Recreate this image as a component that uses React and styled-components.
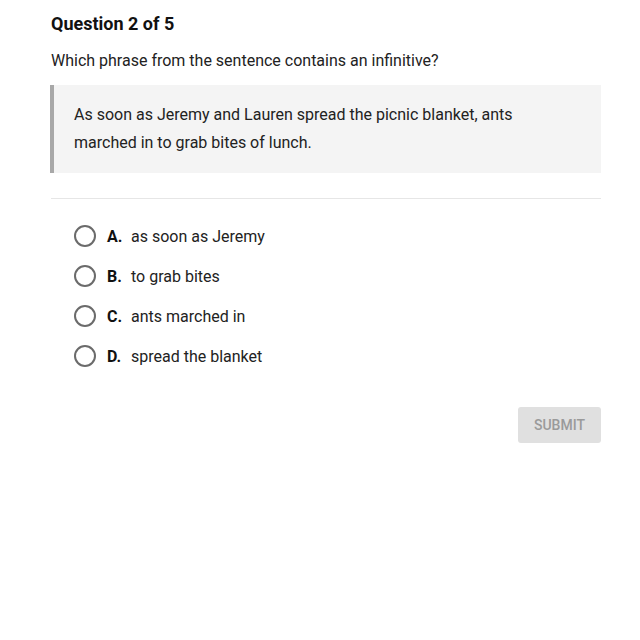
import React from "react";
import styled, { createGlobalStyle } from "styled-components";

const GlobalStyle = createGlobalStyle`
  body {
    margin: 0;
    background: #fff;
    font-family: Roboto, "Liberation Sans", sans-serif;
    color: #222;
  }
`;

const Page = styled.div`
  width: 550px;
  padding: 13px 39px 0 51px;
`;

const Title = styled.h2`
  margin: 0;
  font-size: 18px;
  font-weight: 700;
  line-height: 22px;
  color: #111;
`;

const Prompt = styled.p`
  margin: 16px 0 0;
  font-size: 16px;
  line-height: 20px;
  color: #222;
`;

const Passage = styled.blockquote`
  margin: 14px 0 0 -1px;
  padding: 16px 24px 16px 20px;
  background: #f4f4f4;
  border-left: 4px solid #a8a8a8;
  font-size: 16px;
  line-height: 28px;
  color: #222;
`;

const Divider = styled.hr`
  margin: 25px 0 0;
  border: none;
  border-top: 1px solid #e6e6e6;
`;

const Options = styled.div`
  display: flex;
  flex-direction: column;
  gap: 18px;
  padding: 26px 0 0 23px;
`;

const Option = styled.label`
  display: flex;
  align-items: center;
  height: 22px;
  font-size: 16px;
  color: #222;
  cursor: pointer;
`;

const Radio = styled.span`
  width: 18px;
  height: 18px;
  border: 2px solid #6b6b6b;
  border-radius: 50%;
  margin-right: 11px;
  flex-shrink: 0;
`;

const Letter = styled.b`
  width: 24px;
  font-weight: 700;
  color: #111;
`;

const Footer = styled.div`
  display: flex;
  justify-content: flex-end;
  margin-top: 40px;
`;

const SubmitButton = styled.button`
  width: 83px;
  height: 36px;
  border: none;
  border-radius: 3px;
  background: #e0e0e0;
  color: #9a9a9a;
  font-family: Roboto, "Liberation Sans", sans-serif;
  font-size: 14px;
  font-weight: 500;
`;

const choices = [
  ["A.", "as soon as Jeremy"],
  ["B.", "to grab bites"],
  ["C.", "ants marched in"],
  ["D.", "spread the blanket"],
];

export default function App() {
  return (
    <>
      <GlobalStyle />
      <Page>
        <Title>Question 2 of 5</Title>
        <Prompt>Which phrase from the sentence contains an infinitive?</Prompt>
        <Passage>
          As soon as Jeremy and Lauren spread the picnic blanket, ants
          marched in to grab bites of lunch.
        </Passage>
        <Divider />
        <Options>
          {choices.map(([letter, text]) => (
            <Option key={letter}>
              <Radio />
              <Letter>{letter}</Letter>
              {text}
            </Option>
          ))}
        </Options>
        <Footer>
          <SubmitButton>SUBMIT</SubmitButton>
        </Footer>
      </Page>
    </>
  );
}
